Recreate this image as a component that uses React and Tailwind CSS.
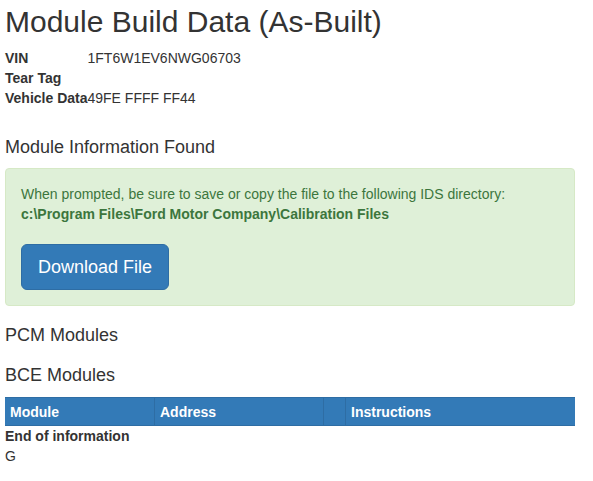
export default function App() {
  return (
    <div className="bg-white text-[#333] pl-[5px] pr-[18px] pt-[5px] pb-4 text-[14px] leading-[20px]" style={{ fontFamily: '"Liberation Sans", Arial, Helvetica, sans-serif' }}>
      <h2 className="text-[30px] leading-[33px] font-normal">Module Build Data (As-Built)</h2>
      <div className="mt-[10px] grid grid-cols-[auto_1fr]">
        <div className="font-bold">VIN</div>
        <div>1FT6W1EV6NWG06703</div>
        <div className="font-bold">Tear Tag</div>
        <div></div>
        <div className="font-bold">Vehicle Data</div>
        <div>49FE FFFF FF44</div>
      </div>
      <h4 className="mt-[29px] text-[18px] leading-[20px] font-normal">Module Information Found</h4>
      <div className="mt-[11px] rounded-[4px] border border-[#d6e9c6] bg-[#dff0d8] p-[15px] text-[#3c763d]">
        <div className="text-[14px] leading-[20px]">When prompted, be sure to save or copy the file to the following IDS directory:</div>
        <div className="text-[14px] leading-[20px] font-bold">c:\Program Files\Ford Motor Company\Calibration Files</div>
        <button className="mt-[20px] rounded-[6px] border border-[#2e6da4] bg-[#337ab7] px-[16px] py-[10px] text-[18px] leading-[24px] text-white">Download File</button>
      </div>
      <h4 className="mt-[19px] text-[18px] leading-[20px] font-normal">PCM Modules</h4>
      <h4 className="mt-[20px] text-[18px] leading-[20px] font-normal">BCE Modules</h4>
      <div className="mt-[12px] grid grid-cols-[149px_169px_22px_1fr] h-[29px] bg-[#337ab7] border-y border-[#2e6da4] text-white text-[14px] font-bold">
        <div className="flex items-center px-[5px]">Module</div>
        <div className="flex items-center px-[5px] border-l border-[#2e6da4]">Address</div>
        <div className="flex items-center px-[5px] border-l border-[#2e6da4]"></div>
        <div className="flex items-center px-[5px] border-l border-[#2e6da4]">Instructions</div>
      </div>
      <div className="text-[14px] leading-[20px] font-bold">End of information</div>
      <div className="text-[14px] leading-[20px]">G</div>
    </div>
  );
}
